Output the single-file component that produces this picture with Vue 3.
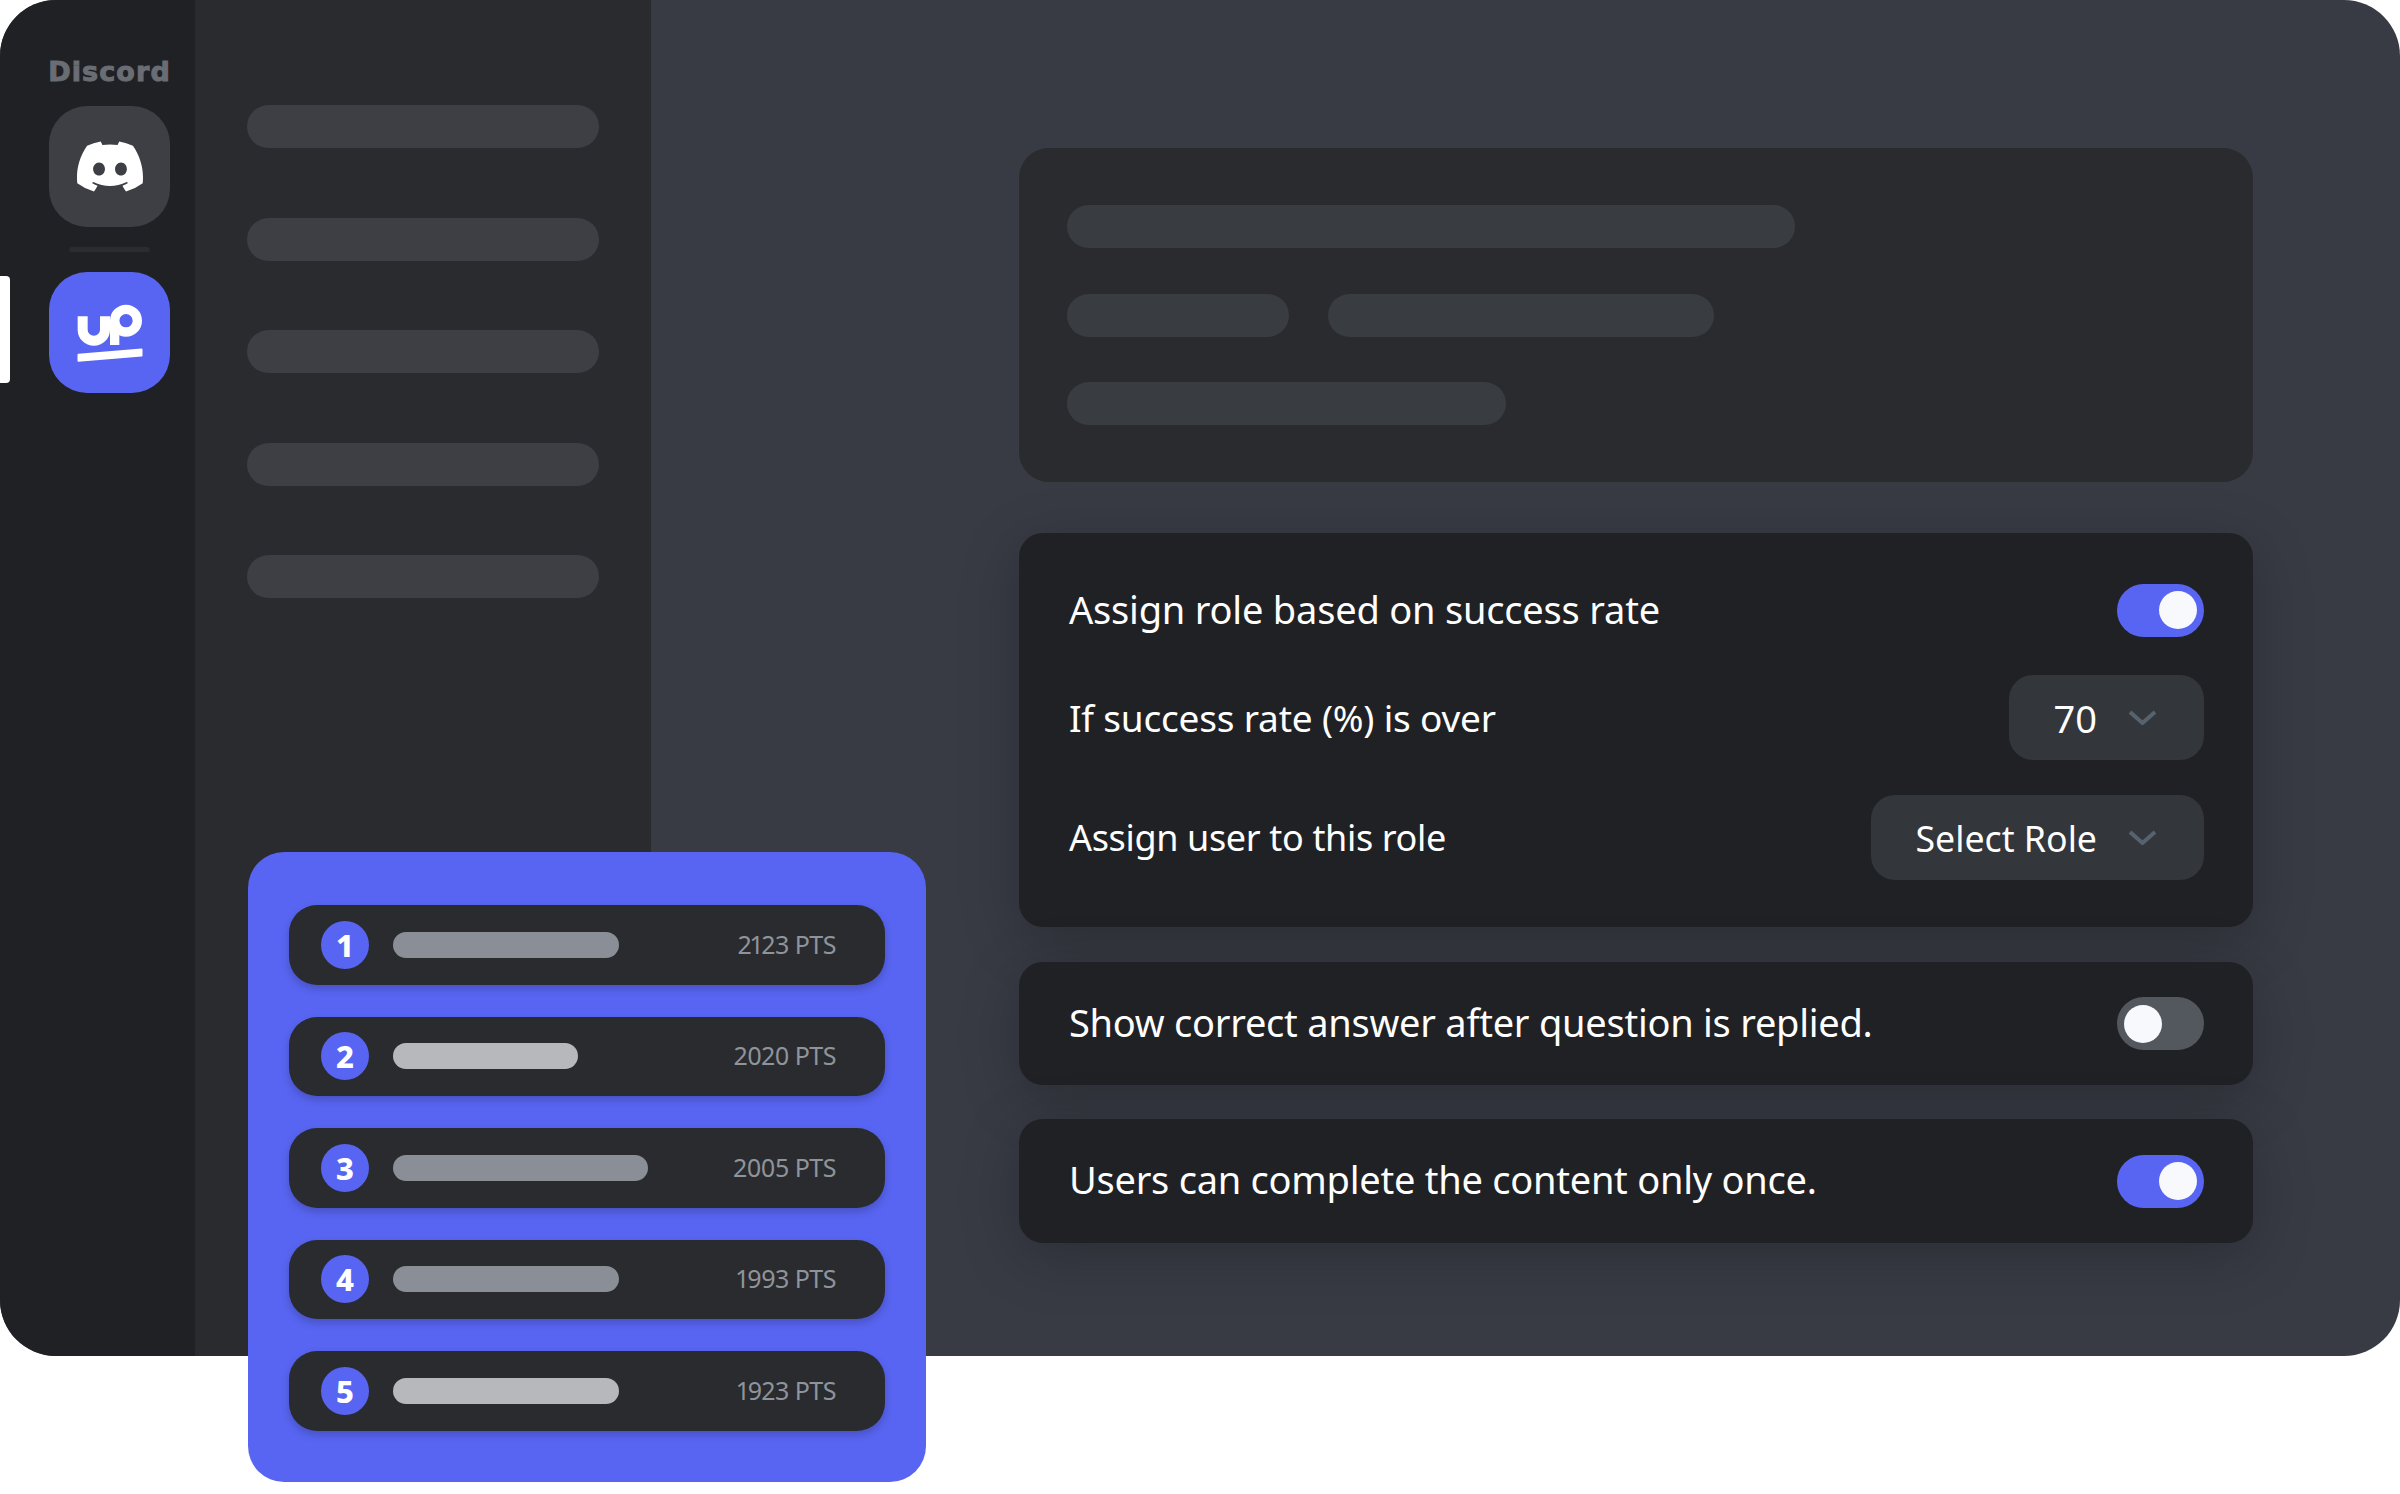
<script setup>
const skeletons = [1, 2, 3, 4, 5]
const ranks = [
  { n: 1, w: 226, tone: 'grey', pts: '2123 PTS' },
  { n: 2, w: 185, tone: 'light', pts: '2020 PTS' },
  { n: 3, w: 255, tone: 'grey', pts: '2005 PTS' },
  { n: 4, w: 226, tone: 'grey', pts: '1993 PTS' },
  { n: 5, w: 226, tone: 'light', pts: '1923 PTS' }
]
</script>

<template>
  <div class="page">
    <div class="frame">
      <aside class="rail">
        <div class="brand">Discord</div>
        <div class="server grey">
          <svg class="discord" viewBox="0 0 127.14 96.36" aria-hidden="true">
            <path fill="#fff" d="M107.7,8.07A105.15,105.15,0,0,0,81.47,0a72.06,72.06,0,0,0-3.36,6.83A97.68,97.68,0,0,0,49,6.83,72.37,72.37,0,0,0,45.64,0,105.89,105.89,0,0,0,19.39,8.09C2.79,32.65-1.71,56.6.54,80.21h0A105.73,105.73,0,0,0,32.71,96.36,77.7,77.7,0,0,0,39.6,85.25a68.42,68.42,0,0,1-10.85-5.18c.91-.66,1.8-1.34,2.66-2a75.57,75.57,0,0,0,64.32,0c.87.71,1.76,1.39,2.66,2a68.68,68.68,0,0,1-10.87,5.19,77,77,0,0,0,6.89,11.1A105.25,105.25,0,0,0,126.6,80.22h0C129.24,52.84,122.09,29.11,107.7,8.07ZM42.45,65.69C36.18,65.69,31,60,31,53s5-12.74,11.43-12.74S54,46,53.89,53,48.84,65.69,42.45,65.69Zm42.24,0C78.41,65.69,73.25,60,73.25,53s5-12.74,11.44-12.74S96.23,46,96.12,53,91.08,65.69,84.69,65.69Z"/>
          </svg>
        </div>
        <div class="divider"></div>
        <div class="server blue">
          <span class="marker"></span>
          <svg class="up" viewBox="0 0 360 360" aria-hidden="true">
            <g fill="none" stroke="#fff">
              <path stroke-width="30" d="M98 130V170A33.5 33.5 0 0 0 165 170V130"/>
              <path stroke-width="28" d="M194 216V143"/>
              <circle stroke-width="28" cx="228" cy="143" r="34"/>
            </g>
            <path fill="#fff" stroke="#fff" stroke-width="5" stroke-linejoin="round" d="M85 245 275 229V248L85 264Z"/>
          </svg>
        </div>
      </aside>

      <nav class="channels">
        <div v-for="s in skeletons" :key="s" class="channel"></div>
      </nav>

      <main class="main">
        <section class="intro">
          <div class="line w1"></div>
          <div class="line-row">
            <div class="line w2"></div>
            <div class="line w3"></div>
          </div>
          <div class="line w4"></div>
        </section>

        <section class="card settings">
          <div class="row first">
            <span class="label-lg">Assign role based on success rate</span>
            <span class="toggle on"><i></i></span>
          </div>
          <div class="row second">
            <span class="label-md">If success rate (%) is over</span>
            <span class="select small">70
              <svg class="chev" viewBox="0 0 29 15" aria-hidden="true"><path d="M2 2 14.5 13 27 2"/></svg>
            </span>
          </div>
          <div class="row third">
            <span class="label-sm">Assign user to this role</span>
            <span class="select large">Select Role
              <svg class="chev" viewBox="0 0 29 15" aria-hidden="true"><path d="M2 2 14.5 13 27 2"/></svg>
            </span>
          </div>
        </section>

        <section class="card single gap2">
          <span class="label-lg tight">Show correct answer after question is replied.</span>
          <span class="toggle off"><i></i></span>
        </section>

        <section class="card single gap3">
          <span class="label-lg tight">Users can complete the content only once.</span>
          <span class="toggle on"><i></i></span>
        </section>
      </main>
    </div>

    <section class="board">
      <div v-for="r in ranks" :key="r.n" class="rank">
        <span class="num">{{ r.n }}</span>
        <span class="bar" :class="r.tone" :style="{ width: r.w + 'px' }"></span>
        <span class="pts">{{ r.pts }}</span>
      </div>
    </section>
  </div>
</template>

<style>
html, body { margin: 0; background: #fff; }
</style>

<style scoped>
.page {
  position: relative;
  width: 2400px;
  height: 1494px;
  overflow: hidden;
  background: #fff;
  font-family: "Noto Sans", "Open Sans", sans-serif;
  color: #fff;
}
.frame {
  display: flex;
  height: 1356px;
  border-radius: 56px;
  overflow: hidden;
  background: #383b44;
}
.rail {
  width: 195px;
  flex: none;
  background: #202125;
  display: flex;
  flex-direction: column;
  align-items: center;
  box-sizing: border-box;
  padding: 57px 25px 0 49px;
}
.brand {
  font-family: "DejaVu Sans", sans-serif;
  font-weight: 700;
  font-size: 27px;
  line-height: 30px;
  letter-spacing: 1.1px;
  color: #6a6d73;
  white-space: nowrap;
  -webkit-text-stroke: 1px #6a6d73;
}
.server {
  position: relative;
  width: 121px;
  height: 121px;
  flex: none;
  border-radius: 38px;
  display: flex;
  align-items: center;
  justify-content: center;
}
.server.grey { background: #3d3f45; margin-top: 19px; }
.server.blue { background: #5865f2; }
.discord { width: 66px; height: 51px; }
.up { width: 120px; height: 120px; }
.marker {
  position: absolute;
  left: -49px;
  top: 4px;
  width: 10px;
  height: 107px;
  background: #fff;
  border-radius: 0 4px 4px 0;
}
.divider {
  width: 81px;
  height: 5px;
  margin: 20px 0;
  border-radius: 3px;
  background: #2b2c30;
}
.channels {
  width: 456px;
  flex: none;
  background: #2a2b2f;
  box-sizing: border-box;
  padding: 105px 52px 0;
  display: flex;
  flex-direction: column;
  gap: 69.5px;
}
.channel {
  height: 43px;
  border-radius: 22px;
  background: #3d3f45;
}
.main {
  flex: 1;
  padding: 148px 147px 0 368px;
  min-width: 0;
}
.intro {
  height: 334px;
  box-sizing: border-box;
  padding: 57px 48px;
  background: #2a2b2f;
  border-radius: 30px;
  display: flex;
  flex-direction: column;
  gap: 45.5px;
}
.line {
  height: 43px;
  border-radius: 22px;
  background: #393c41;
}
.line-row { display: flex; gap: 39px; }
.w1 { width: 728px; }
.w2 { width: 222px; }
.w3 { width: 386px; }
.w4 { width: 439px; }
.card {
  background: #202125;
  border-radius: 24px;
  box-shadow: 0 14px 60px rgba(0, 0, 0, .22);
  box-sizing: border-box;
  padding: 0 49px 0 50px;
}
.label-lg { font-size: 38px; letter-spacing: -.2px; padding-bottom: 2px; }
.label-lg.tight { letter-spacing: -.25px; padding-bottom: 4px; }
.label-md { font-size: 37px; letter-spacing: -.2px; }
.label-sm { font-size: 36px; letter-spacing: -.35px; }
.settings { margin-top: 51px; height: 394px; padding-top: 50px; }
.row { display: flex; align-items: center; justify-content: space-between; }
.second { margin-top: 38px; }
.third { margin-top: 35px; }
.single {
  display: flex;
  align-items: center;
  justify-content: space-between;
  height: 124px;
}
.gap2 { margin-top: 35px; height: 123px; }
.gap3 { margin-top: 34px; }
.toggle {
  width: 87px;
  height: 53px;
  flex: none;
  border-radius: 27px;
  display: flex;
  align-items: center;
  box-sizing: border-box;
  padding: 0 7px;
}
.toggle i {
  display: block;
  width: 38px;
  height: 38px;
  border-radius: 50%;
  background: #f8f9fd;
}
.toggle.on { background: #5865f2; justify-content: flex-end; }
.toggle.off { background: #52585e; justify-content: flex-start; }
.select {
  height: 85px;
  flex: none;
  box-sizing: border-box;
  border-radius: 24px;
  background: #33363b;
  display: flex;
  align-items: center;
  justify-content: flex-end;
  gap: 31px;
  padding-right: 47px;
  font-size: 35.7px;
}
.small { width: 195px; font-size: 38px; }
.large { width: 333px; }
.chev { width: 29px; height: 15px; }
.chev path { fill: none; stroke: #56636f; stroke-width: 4; }
.board {
  position: absolute;
  left: 248px;
  top: 852px;
  width: 678px;
  height: 630px;
  box-sizing: border-box;
  padding: 53px 41px 0;
  border-radius: 36px;
  background: #5865f2;
  display: flex;
  flex-direction: column;
  gap: 32px;
}
.rank {
  height: 79.5px;
  flex: none;
  box-sizing: border-box;
  border-radius: 28px;
  background: #2a2b2f;
  box-shadow: 0 4px 8px rgba(0, 0, 0, .2);
  display: flex;
  align-items: center;
  padding: 0 49px 0 32px;
}
.num {
  width: 48px;
  height: 48px;
  flex: none;
  border-radius: 50%;
  background: #5865f2;
  display: flex;
  align-items: center;
  justify-content: center;
  font-size: 31px;
  font-weight: 800;
}
.bar {
  height: 26px;
  margin-left: 24px;
  border-radius: 13px;
}
.bar.grey { background: #8a8e96; }
.bar.light { background: #b7b8bc; }
.pts {
  margin-left: auto;
  padding-bottom: 2px;
  font-size: 25px;
  letter-spacing: -.5px;
  font-variant-numeric: proportional-nums;
  color: #8f949b;
}
</style>
